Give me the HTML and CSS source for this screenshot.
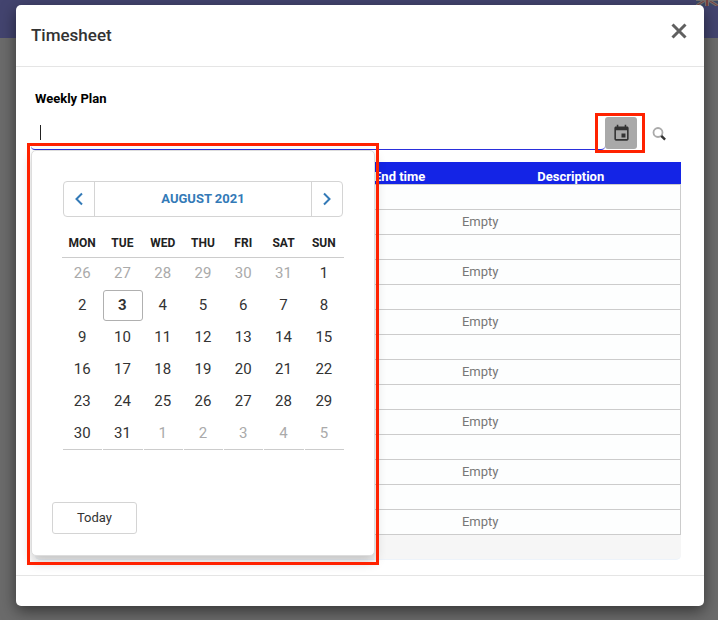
FILE: index.html
```
<!DOCTYPE html>
<html lang="en">
<head>
    <meta charset="UTF-8">
    <meta name="viewport" content="width=device-width, initial-scale=1.0">
    <title>Timesheet</title>
    <link rel="stylesheet" href="styles.css">
</head>
<body>
    <header class="topbar">
        <svg class="flag" width="22" height="14" viewBox="0 0 22 14">
            <rect width="22" height="14" fill="#3b4a68"/>
            <path d="M0 0L22 14M22 0L0 14" stroke="#77716e" stroke-width="3"/>
            <path d="M0 0L22 14M22 0L0 14" stroke="#7a4040" stroke-width="1"/>
            <path d="M11 0V14M0 7H22" stroke="#77716e" stroke-width="4"/>
            <path d="M11 0V14M0 7H22" stroke="#7a4040" stroke-width="2"/>
        </svg>
    </header>
    <div class="overlay">
        <div class="modal" role="dialog" aria-labelledby="modal-title">
            <div class="modal-header">
                <h1 id="modal-title">Timesheet</h1>
                <button type="button" class="close" aria-label="Close">
                    <svg width="16" height="16" viewBox="0 0 16 16">
                        <path d="M1.5 1.5L14.5 14.5M14.5 1.5L1.5 14.5" stroke="#606060" stroke-width="3"/>
                    </svg>
                </button>
            </div>
            <div class="modal-body">
                <label for="week">Weekly Plan</label>
                <div class="field">
                    <input type="text" id="week" autocomplete="off">
                    <button type="button" class="calendar-btn" aria-label="Choose date">
                        <svg width="19" height="19" viewBox="0 0 24 24">
                            <path fill="#333" d="M17 12h-5v5h5v-5zM16 1v2H8V1H6v2H5c-1.110 0-1.990.9-1.990 2L3 19c0 1.100.89 2 2 2h14c1.100 0 2-.9 2-2V5c0-1.100-.9-2-2-2h-1V1h-2zm3 18H5V8h14v11z"/>
                        </svg>
                    </button>
                    <button type="button" class="search-btn" aria-label="Search">
                        <svg width="14" height="14" viewBox="0 0 14 14">
                            <circle cx="6" cy="5.500" r="4.500" fill="none" stroke="#aaa" stroke-width="1.800"/>
                            <path d="M9.300 8.800L13.100 12.600" stroke="#333" stroke-width="2.400"/>
                        </svg>
                    </button>

                    <div class="picker">
                        <div class="picker-nav">
                            <button type="button" aria-label="Previous month">
                                <svg width="8" height="14" viewBox="0 0 8 14"><path d="M7 1.500L1.500 7L7 12.500"/></svg>
                            </button>
                            <button type="button" class="month">AUGUST 2021</button>
                            <button type="button" aria-label="Next month">
                                <svg width="8" height="14" viewBox="0 0 8 14"><path d="M1 1.500L6.500 7L1 12.500"/></svg>
                            </button>
                        </div>
                        <table class="days">
                            <thead>
                                <tr><th>MON</th><th>TUE</th><th>WED</th><th>THU</th><th>FRI</th><th>SAT</th><th>SUN</th></tr>
                            </thead>
                            <tbody id="days"></tbody>
                        </table>
                        <div class="picker-footer">
                            <button type="button" class="today">Today</button>
                        </div>
                    </div>
                </div>

                <div class="grid">
                    <table class="plan">
                        <colgroup>
                            <col class="col-day">
                            <col class="col-start">
                            <col class="col-end">
                            <col class="col-desc">
                        </colgroup>
                        <thead>
                            <tr>
                                <th></th>
                                <th></th>
                                <th><span>End time</span></th>
                                <th><span>Description</span></th>
                            </tr>
                        </thead>
                        <tbody id="plan"></tbody>
                    </table>
                    <div class="grid-footer"></div>
                </div>
            </div>
            <div class="modal-footer"></div>
        </div>
    </div>

    <script src="main.js"></script>
</body>
</html>
```

FILE: styles.css
```
* {
    box-sizing: border-box;
}
body {
    margin: 0;
    min-height: 100vh;
    background: #6b6b6b;
    color: #333;
    font-family: Roboto, "Liberation Sans", sans-serif;
    font-size: 13px;
    line-height: 16px;
}
button {
    display: flex;
    align-items: center;
    justify-content: center;
    padding: 0;
    border: 0;
    background: none;
    color: inherit;
    font: inherit;
    cursor: pointer;
}
.topbar {
    display: flex;
    justify-content: flex-end;
    height: 38px;
    background: #43446f;
    overflow: hidden;
}
.flag {
    margin-top: -8px;
}
.overlay {
    position: absolute;
    top: 0;
    left: 0;
    width: 100%;
    padding: 5px 14px 14px 16px;
}
.modal {
    background: #fff;
    border-radius: 5px;
    box-shadow: 0 5px 15px rgba(0, 0, 0, 0.5);
}
.modal-header {
    display: flex;
    align-items: center;
    justify-content: space-between;
    height: 62px;
    padding: 0 15px 2px;
    border-bottom: 1px solid #e5e5e5;
}
.modal-header h1 {
    margin: 0;
    font-size: 17px;
    font-weight: 500;
    line-height: 20px;
}
.close {
    width: 20px;
    height: 20px;
    margin-bottom: 8px;
}
.modal-body {
    padding: 24px 23px 15px 19px;
}
.modal-body label {
    display: block;
    color: #000;
    font-weight: 700;
}
/* negative margin lets the underline start left of the label */
.field {
    position: relative;
    display: flex;
    align-items: flex-end;
    height: 43px;
    margin-left: -4px;
}
.field input {
    flex: 1;
    min-width: 0;
    height: 34px;
    padding: 0 9px;
    border: 0;
    border-bottom: 1px solid #2a2fdc;
    border-radius: 4px;
    outline: none;
    background: linear-gradient(#222, #222) 9px 9px / 1px 15px no-repeat;
    font: inherit;
}
.calendar-btn {
    position: relative;
    width: 32px;
    height: 32px;
    margin-bottom: 1px;
    border-radius: 3px;
    background: #a9a9a9;
}
.calendar-btn::after {
    content: "";
    position: absolute;
    inset: -4px -8px -4px -10px;
    border: 3px solid #ff2200;
}
.search-btn {
    width: 44px;
    height: 32px;
}

.picker {
    position: absolute;
    top: 100%;
    left: 0;
    z-index: 2;
    width: 344px;
    padding: 30px 0 21px;
    border: 1px solid #ddd;
    border-radius: 5px;
    background: #fff;
    box-shadow: 0 6px 12px rgba(0, 0, 0, 0.2);
}
.picker::after {
    content: "";
    position: absolute;
    inset: -8px -5px -10px;
    border: 3px solid #ff2200;
    pointer-events: none;
}
.picker-nav {
    display: flex;
    height: 36px;
    margin: 0 31px;
    border: 1px solid #d4d4d4;
    border-radius: 4px;
    color: #337ab7;
}
.picker-nav button {
    width: 30px;
}
.picker-nav .month {
    flex: 1;
    border: solid #d4d4d4;
    border-width: 0 1px;
    font-weight: 700;
}
.picker-nav path {
    fill: none;
    stroke: #337ab7;
    stroke-width: 2;
}
.days {
    width: 282px;
    margin: 11px 30px 0;
    border-spacing: 0;
    table-layout: fixed;
}
.days th {
    height: 30px;
    padding: 0;
    border-bottom: 1px solid #ccc;
    color: #222;
    font-size: 12px;
    font-weight: 700;
}
.days td {
    height: 32px;
    padding: 0 0 1px 1px;
}
.days button {
    width: 100%;
    height: 31px;
    padding: 0 1px 2px 0;
    border-radius: 3px;
    font-size: 15px;
}
.days .muted {
    color: #aaa;
}
.days .selected {
    border: 1px solid #b0b0b0;
    font-weight: 700;
}
.days tr:last-child td {
    padding-bottom: 0;
}
.days tr:last-child button {
    height: 32px;
    border-bottom: 1px solid #ccc;
    border-radius: 0;
}
.picker-footer {
    padding: 52px 20px 0;
}
.today {
    width: 85px;
    height: 32px;
    border: 1px solid #d4d4d4;
    border-radius: 3px;
}

.grid {
    margin-top: 12px;
}
.plan {
    width: 100%;
    border-collapse: collapse;
    table-layout: fixed;
}
.col-day {
    width: 38%;
}
.col-start {
    width: 9%;
}
.col-end {
    width: 19%;
}
.col-desc {
    width: 34%;
}
.plan th {
    height: 22px;
    padding: 0;
    background: #1424e6;
    color: #fff;
    font-weight: 700;
    vertical-align: bottom;
}
.plan th span {
    display: block;
    height: 15px;
    overflow: hidden;
}
.plan td {
    height: 25px;
    padding: 0;
    border-top: 1px solid #ccc;
    border-bottom: 1px solid #ccc;
    background: #fdfefe;
    color: #777;
    text-align: center;
}
.plan td:last-child {
    border-right: 1px solid #ccc;
}
.grid-footer {
    height: 25px;
    border-bottom: 1px solid #edf3fa;
    border-radius: 0 0 5px 5px;
    background: #f6f6f6;
}
.modal-footer {
    height: 31px;
    border-top: 1px solid #e5e5e5;
}
```

FILE: main.js
```
const days = document.getElementById('days');
const plan = document.getElementById('plan');

// August 2021 starts on a Sunday, so the grid opens on 26 July
const start = new Date(2021, 6, 26);

for (let week = 0; week < 6; week++) {
    const row = days.insertRow();
    for (let i = 0; i < 7; i++) {
        const date = new Date(2021, 6, start.getDate() + week * 7 + i);
        const button = document.createElement('button');
        button.type = 'button';
        button.textContent = date.getDate();
        if (date.getMonth() !== 7) {
            button.classList.add('muted');
        } else if (date.getDate() === 3) {
            button.classList.add('selected');
        }
        row.insertCell().appendChild(button);
    }
}

// one heading row and one entry row for each day of the week
for (let i = 0; i < 7; i++) {
    plan.insertRow().insertCell().colSpan = 4;
    const row = plan.insertRow();
    row.insertCell();
    const cell = row.insertCell();
    cell.colSpan = 3;
    cell.textContent = 'Empty';
}
```
